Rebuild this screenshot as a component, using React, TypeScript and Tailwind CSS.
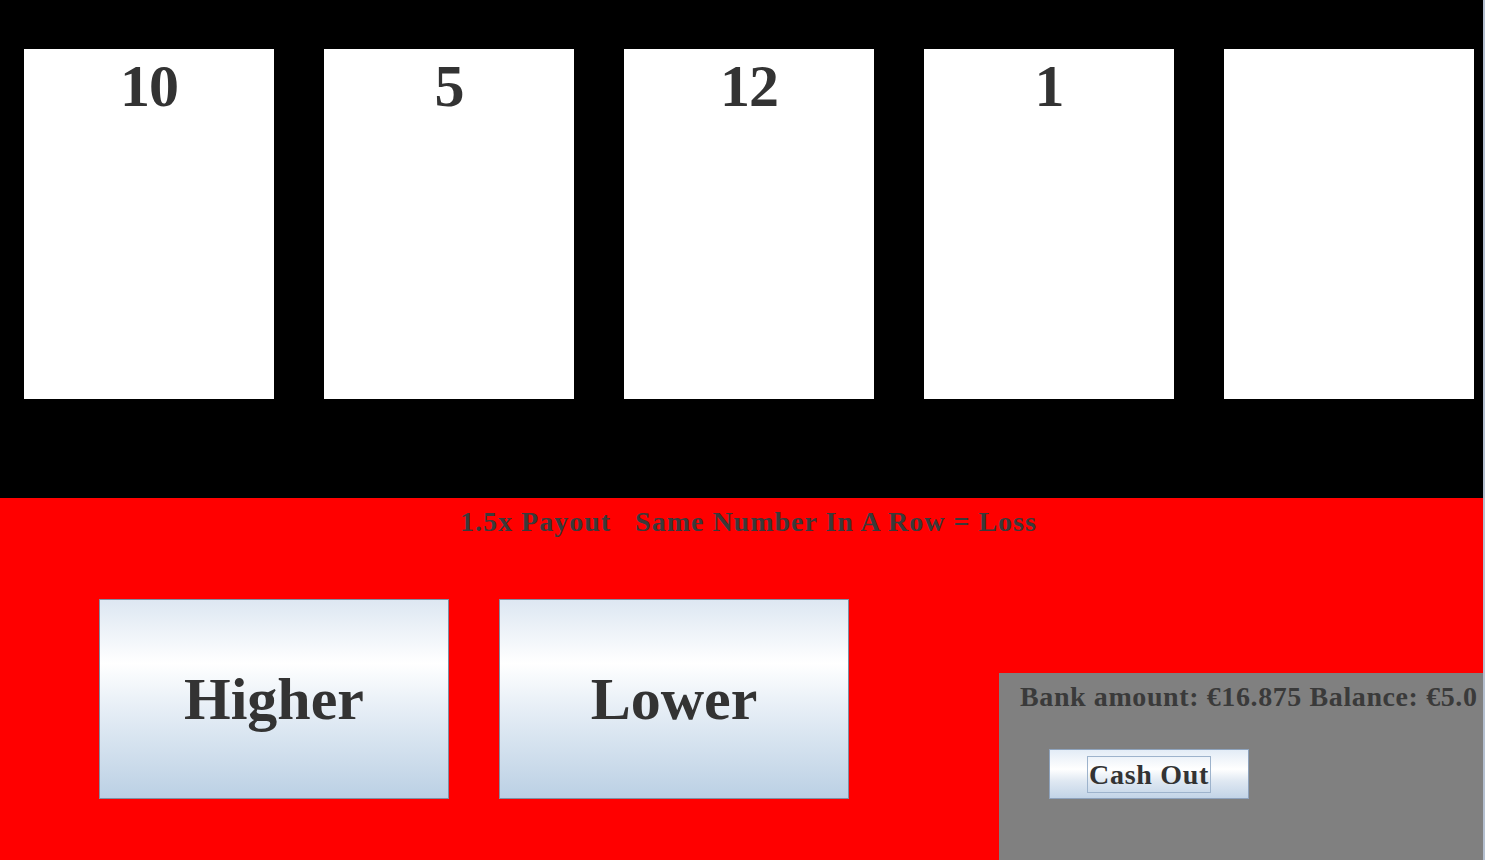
const cards = ['10', '5', '12', '1', ''];

function GradientButton({ label, className }: { label: string; className: string }) {
  return (
    <button
      className={`border border-[#7f8fa3] bg-[linear-gradient(to_bottom,#dde7f2_0%,#ffffff_32%,#e6eef6_55%,#bbd0e4_100%)] text-[#333333] font-bold ${className}`}
    >
      {label}
    </button>
  );
}

export default function App() {
  return (
    <div className="flex h-[860px] w-[1485px] overflow-hidden font-['Liberation_Serif',serif]">
      <div className="flex w-[1483px] flex-col">
        {/* Cards */}
        <div className="flex h-[498px] gap-[50px] bg-black pl-[24px] pt-[49px]">
          {cards.map((c, i) => (
            <div key={i} className="h-[350px] w-[250px] shrink-0 bg-white text-center">
              <div className="pt-[7px] text-[60px] leading-none font-bold tracking-[-1px] text-[#333333]">{c}</div>
            </div>
          ))}
        </div>

        {/* Controls */}
        <div className="flex flex-1 flex-col bg-[#ff0000]">
          <div className="flex h-[48px] justify-center pl-[14px] pt-[6px]">
            <span className="whitespace-pre text-[28px] leading-[36px] font-bold tracking-[1px] text-[#3a3a3a]">
              {'1.5x Payout   Same Number In A Row = Loss'}
            </span>
          </div>
          <div className="flex flex-1">
            <div className="flex gap-[50px] pl-[99px] pt-[53px]">
              <GradientButton label="Higher" className="h-[200px] w-[350px] text-[60px]" />
              <GradientButton label="Lower" className="h-[200px] w-[350px] text-[60px]" />
            </div>
            <div className="ml-[150px] mt-auto h-[187px] w-[484px] bg-[#808080]">
              <div className="whitespace-nowrap pl-[21px] pt-[6px] text-[28px] leading-[36px] font-bold tracking-[0.6px] text-[#3a3a3a]">
                Bank amount: €16.875 Balance: €5.0
              </div>
              <div className="pl-[50px] pt-[34px]">
                <button className="flex h-[50px] w-[200px] items-center justify-center border border-[#8ea3bd] bg-[linear-gradient(to_bottom,#e3ecf6_0%,#ffffff_40%,#dfe8f2_65%,#c2d4e7_100%)]">
                  <span className="border border-[#9db3cc] px-[1px] text-[28px] leading-[35px] font-bold tracking-[0.7px] text-[#333333]">
                    Cash Out
                  </span>
                </button>
              </div>
            </div>
          </div>
        </div>
      </div>
      <div className="w-[2px] bg-[#b4bfcf]" />
    </div>
  );
}
